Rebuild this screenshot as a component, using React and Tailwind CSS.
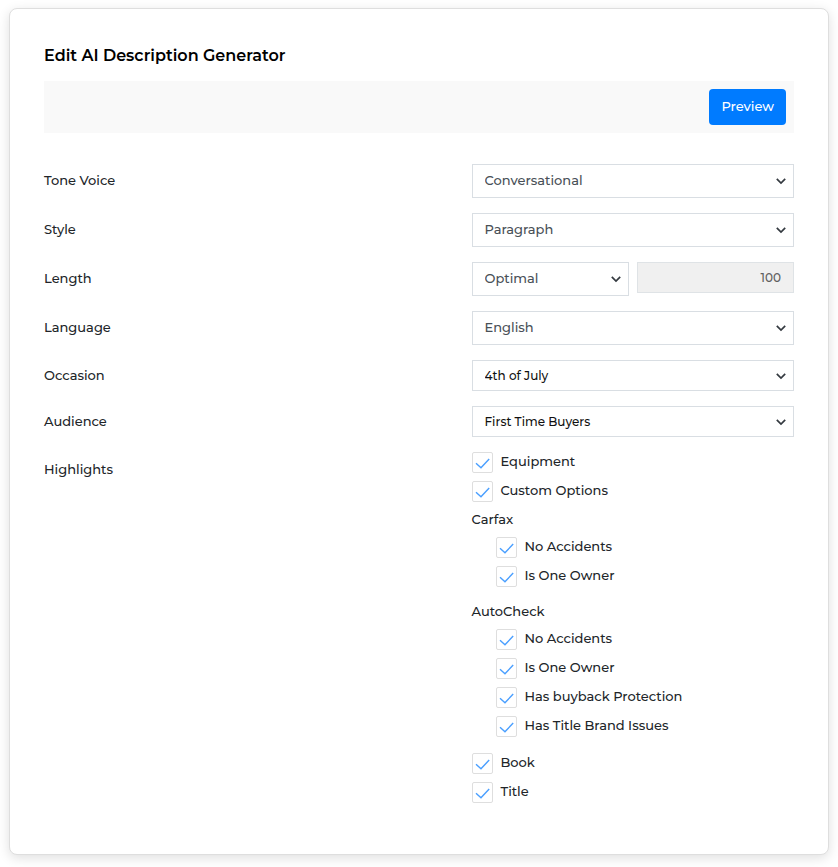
import { useState } from "react";
import clsx from "clsx";

const selectFields = [
  { id: "tone", label: "Tone Voice", options: ["Conversational", "Formal"] },
  { id: "style", label: "Style", options: ["Paragraph", "Bullets"] },
  { id: "length", label: "Length", options: ["Optimal", "Custom"] },
  { id: "language", label: "Language", options: ["English", "Spanish"] },
  { id: "occasion", label: "Occasion", options: ["4th of July", "Labor Day"], compact: true },
  { id: "audience", label: "Audience", options: ["First Time Buyers", "Families"], compact: true },
];

function Select({ id, options, compact }) {
  return (
    <div className="relative min-w-0">
      <select
        id={id}
        className={clsx(
          "block w-full appearance-none border border-[#d9dee3] bg-white pr-8 pl-3 font-medium",
          compact ? "h-[31px] text-xs text-[#111]" : "h-[34px] text-[13px] text-[#495057]"
        )}
      >
        {options.map((option) => (
          <option key={option}>{option}</option>
        ))}
      </select>
      <svg
        className="pointer-events-none absolute top-1/2 right-2 h-2 w-2.5 -translate-y-1/2"
        viewBox="0 0 10 8"
        fill="none"
        stroke="#343a40"
        strokeWidth="1.7"
      >
        <path d="M0.8 1.8 5 6l4.2-4.2" />
      </svg>
    </div>
  );
}

function Check({ id, label }) {
  const [checked, setChecked] = useState(true);

  return (
    <div className="flex h-[29px] items-start gap-2">
      <span className="relative block size-[21px] shrink-0">
        <input
          id={id}
          type="checkbox"
          checked={checked}
          onChange={(e) => setChecked(e.target.checked)}
          className="block size-full appearance-none rounded-xs border border-[#dedede] bg-white"
        />
        {checked && (
          <svg
            className="pointer-events-none absolute inset-0 size-full"
            viewBox="0 0 22 22"
            fill="none"
            stroke="#4a9fff"
            strokeWidth="1.5"
          >
            <path d="M4.2 11.8 9.4 16.5 18 7.4" />
          </svg>
        )}
      </span>
      <label htmlFor={id} className="leading-[18px]">
        {label}
      </label>
    </div>
  );
}

export default function App() {
  return (
    <div className="bg-white px-[9px] pt-2 pb-3 font-['Montserrat','Inter',sans-serif] text-[13px] font-medium text-[#212529]">
      <main className="rounded-lg border border-[#dedede] bg-white px-[34px] pt-[35px] pb-[43px] shadow-[0_3px_12px_rgba(0,0,0,0.13)]">
        <h1 className="text-base leading-6 font-semibold text-black">Edit AI Description Generator</h1>

        <div className="mt-[13px] flex justify-end bg-[#f9f9f9] p-2">
          <button type="button" className="h-9 rounded bg-[#007bff] px-3 text-[13px] font-medium text-white">
            Preview
          </button>
        </div>

        <form className="mt-[31px]">
          {selectFields.map((field) => (
            <div key={field.id} className="mb-[15px] grid grid-cols-[57fr_43fr] items-center">
              <label htmlFor={field.id}>{field.label}</label>
              <div className="grid auto-cols-fr grid-flow-col items-start gap-2">
                <Select {...field} />
                {field.id === "length" && (
                  <input
                    type="text"
                    aria-label="Word count"
                    defaultValue="100"
                    disabled
                    className="h-[31px] w-full min-w-0 border border-[#dfe3e6] bg-[#f0f0f0] px-3 text-right text-xs font-medium text-[#606060]"
                  />
                )}
              </div>
            </div>
          ))}

          <fieldset className="grid grid-cols-[57fr_43fr]" aria-labelledby="highlights">
            <div id="highlights" className="pt-2 leading-[18px]">
              Highlights
            </div>
            <div>
              <Check id="equipment" label="Equipment" />
              <Check id="custom-options" label="Custom Options" />

              <p className="leading-[18px]">Carfax</p>
              <div className="mt-[9px] mb-[7px] pl-6">
                <Check id="carfax-accidents" label="No Accidents" />
                <Check id="carfax-owner" label="Is One Owner" />
              </div>

              <p className="leading-[18px]">AutoCheck</p>
              <div className="mt-[9px] mb-2 pl-6">
                <Check id="autocheck-accidents" label="No Accidents" />
                <Check id="autocheck-owner" label="Is One Owner" />
                <Check id="autocheck-buyback" label="Has buyback Protection" />
                <Check id="autocheck-title" label="Has Title Brand Issues" />
              </div>

              <Check id="book" label="Book" />
              <Check id="title" label="Title" />
            </div>
          </fieldset>
        </form>
      </main>
    </div>
  );
}
